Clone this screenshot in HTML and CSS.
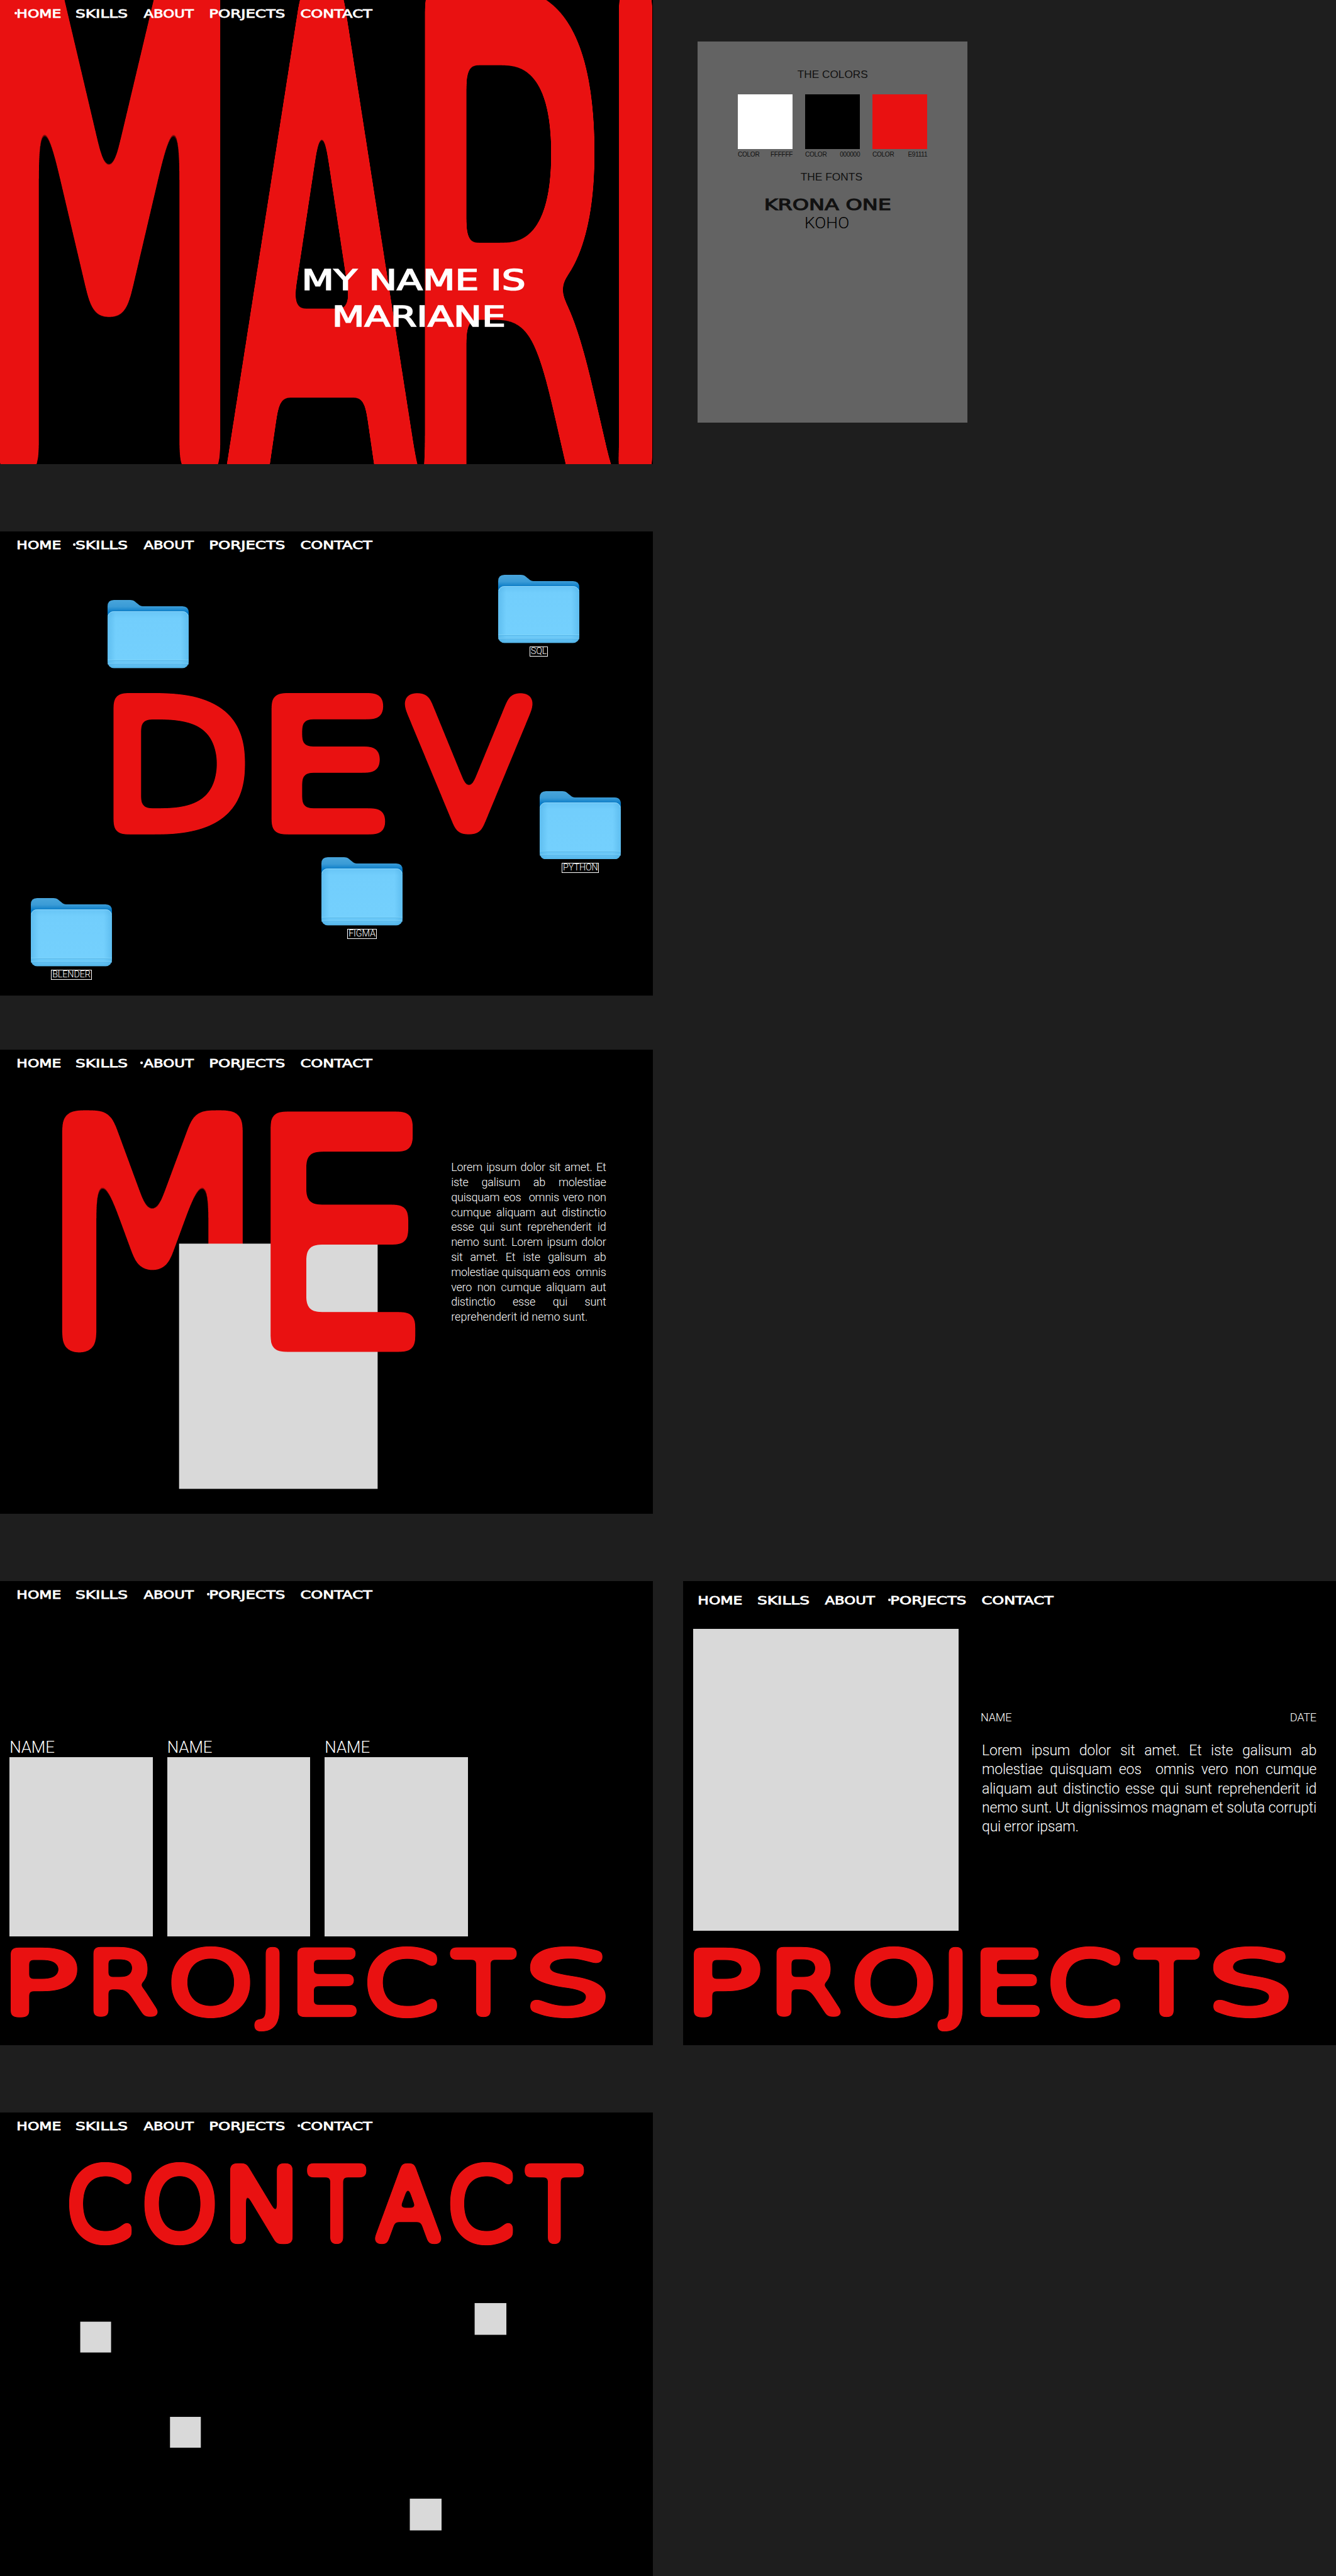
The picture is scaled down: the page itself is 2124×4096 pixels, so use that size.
FILE: index.html
```html
<!DOCTYPE html>
<html lang="en">
<head>
<meta charset="utf-8">
<title>Mariane - portfolio boards</title>
<link rel="stylesheet" href="styles.css">
</head>
<body>
<svg class="defs" width="0" height="0" aria-hidden="true">
  <defs>
    <filter id="soft-s" color-interpolation-filters="sRGB" filterUnits="userSpaceOnUse" x="-50" y="-50" width="1540" height="1124">
      <feMorphology operator="dilate" radius="0 1.500"/>
      <feGaussianBlur stdDeviation="4.500"/>
      <feComponentTransfer result="shape"><feFuncA type="linear" slope="10" intercept="-4.500"/></feComponentTransfer>
      <feFlood flood-color="#e91111"/><feComposite operator="in" in2="shape"/>
    </filter>
    <filter id="soft-m" color-interpolation-filters="sRGB" filterUnits="userSpaceOnUse" x="-50" y="-50" width="1540" height="1124">
      <feMorphology operator="dilate" radius="0 5"/>
      <feGaussianBlur stdDeviation="11"/>
      <feComponentTransfer result="shape"><feFuncA type="linear" slope="22" intercept="-10.500"/></feComponentTransfer>
      <feFlood flood-color="#e91111"/><feComposite operator="in" in2="shape"/>
    </filter>
    <filter id="soft-e" color-interpolation-filters="sRGB" filterUnits="userSpaceOnUse" x="-50" y="-50" width="1540" height="1124">
      <feMorphology operator="dilate" radius="0 9"/>
      <feGaussianBlur stdDeviation="15"/>
      <feComponentTransfer result="shape"><feFuncA type="linear" slope="30" intercept="-14.500"/></feComponentTransfer>
      <feFlood flood-color="#e91111"/><feComposite operator="in" in2="shape"/>
    </filter>
    <filter id="soft-me" color-interpolation-filters="sRGB" filterUnits="userSpaceOnUse" x="-50" y="-50" width="1540" height="1124">
      <feMorphology operator="dilate" radius="0 10"/>
      <feGaussianBlur stdDeviation="19"/>
      <feComponentTransfer result="shape"><feFuncA type="linear" slope="36" intercept="-17.500"/></feComponentTransfer>
      <feFlood flood-color="#e91111"/><feComposite operator="in" in2="shape"/>
    </filter>
    <filter id="soft-l" color-interpolation-filters="sRGB" filterUnits="userSpaceOnUse" x="-150" y="-150" width="1740" height="1324">
      <feGaussianBlur stdDeviation="11 22"/>
      <feComponentTransfer result="shape"><feFuncA type="linear" slope="34" intercept="-16.500"/></feComponentTransfer>
      <feFlood flood-color="#e91111"/><feComposite operator="in" in2="shape"/>
    </filter>
    <filter id="soft-xl" color-interpolation-filters="sRGB" filterUnits="userSpaceOnUse" x="-150" y="-250" width="1740" height="1524">
      <feMorphology operator="dilate" radius="0 70"/>
      <feGaussianBlur stdDeviation="18 30"/>
      <feComponentTransfer result="shape"><feFuncA type="linear" slope="40" intercept="-19.500"/></feComponentTransfer>
      <feFlood flood-color="#e91111"/><feComposite operator="in" in2="shape"/>
    </filter>
    <linearGradient id="back" x1="0" y1="0" x2="0" y2="1">
      <stop offset="0" stop-color="#49a5db"/><stop offset=".3" stop-color="#3a9bd6"/><stop offset=".55" stop-color="#0579c6"/><stop offset="1" stop-color="#0579c6"/>
    </linearGradient>
    <linearGradient id="front" x1="0" y1="0" x2="0" y2="1">
      <stop offset="0" stop-color="#68c5f6"/><stop offset=".12" stop-color="#72cefc"/><stop offset=".85" stop-color="#74d0fd"/><stop offset="1" stop-color="#55b6ea"/>
    </linearGradient>
    <linearGradient id="sides">
      <stop offset="0" stop-color="#3fa3dc" stop-opacity=".4"/><stop offset=".1" stop-color="#3fa3dc" stop-opacity="0"/><stop offset=".9" stop-color="#3fa3dc" stop-opacity="0"/><stop offset="1" stop-color="#3fa3dc" stop-opacity=".4"/>
    </linearGradient>
    <symbol id="folder" viewBox="0 0 179 151">
      <path d="M0 45V14Q0 0 14 0H50C58 0 61 4 66 8C71 12 73 14 80 14H165Q179 14 179 28V50H0Z" fill="url(#back)"/>
      <rect y="25" width="179" height="125.500" rx="14" fill="url(#front)"/>
      <rect y="25" width="179" height="125.500" rx="14" fill="url(#sides)"/>
      <path d="M1 36Q3 25.700 14 25.700H165Q176 25.700 178 36" fill="none" stroke="#98dcfd" stroke-width="1.200"/>
      <path d="M0 134H179M0 141.500H179" stroke="#4fb0e6" stroke-width="1.200"/>
      <path d="M0 132.500H179M0 140H179" stroke="#86d6fb" stroke-width="1"/>
    </symbol>
  </defs>
</svg>

<main class="canvas">
  <section class="board">
    <svg class="lettering" viewBox="0 0 1440 1024"><text class="giant letter-M" y="982" data-cap="1000" data-ink="-14 489">M</text><text class="giant" data-base="1165 1215 1052" data-cap="1200 1250 1087" data-ink="480 942 934 1390 1363 1442">ARI</text></svg>
    <nav class="nav">
      <svg width="95" height="40"><circle cx="-4" cy="29" r="3"/><text y="39" data-cap="19" data-ink="0 95">HOME</text></svg>
      <svg width="113" height="40"><text y="39" data-cap="19" data-ink="0 113">SKILLS</text></svg>
      <svg width="112" height="40"><text y="39" data-cap="19" data-ink="0 112">ABOUT</text></svg>
      <svg width="165" height="40"><text y="39" data-cap="19" data-ink="0 165">PORJECTS</text></svg>
      <svg width="158" height="40"><text y="39" data-cap="19" data-ink="0 159">CONTACT</text></svg>
    </nav>
    <svg class="intro" width="487" height="170"><text y="82" data-cap="48.500" data-ink="0 486">MY NAME IS</text><text y="162" data-cap="48.500" data-ink="67 441">MARIANE</text></svg>
  </section>

  <section class="palette">
    <svg class="caption" width="154" height="24"><text y="20" data-cap="16.500" data-ink="0 154">THE COLORS</text></svg>
    <div class="swatches">
      <div class="swatch white"><i></i><p><span>COLOR</span><span>FFFFFF</span></p></div>
      <div class="swatch black"><i></i><p><span>COLOR</span><span>000000</span></p></div>
      <div class="swatch red"><i></i><p><span>COLOR</span><span>E91111</span></p></div>
    </div>
    <svg class="caption fonts" width="135" height="24"><text y="20" data-cap="16.500" data-ink="0 135">THE FONTS</text></svg>
    <svg class="krona" width="276" height="40"><text y="34" data-cap="27.300" data-ink="0 276">KRONA ONE</text></svg>
    <svg class="koho" width="94" height="32"><text y="30" data-cap="26" data-ink="0 94">KOHO</text></svg>
  </section>

  <section class="board r2">
    <nav class="nav">
      <svg width="95" height="40"><text y="39" data-cap="19" data-ink="0 95">HOME</text></svg>
      <svg width="113" height="40"><circle cx="-4" cy="29" r="3"/><text y="39" data-cap="19" data-ink="0 113">SKILLS</text></svg>
      <svg width="112" height="40"><text y="39" data-cap="19" data-ink="0 112">ABOUT</text></svg>
      <svg width="165" height="40"><text y="39" data-cap="19" data-ink="0 165">PORJECTS</text></svg>
      <svg width="158" height="40"><text y="39" data-cap="19" data-ink="0 159">CONTACT</text></svg>
    </nav>
    <svg class="lettering" viewBox="0 0 1440 1024"><text class="dev" y="663" data-cap="303" data-ink="245 541 593 852 886 1178">DEV</text></svg>
    <figure class="folder f1"><svg><use href="#folder"/></svg></figure>
    <figure class="folder f2"><svg><use href="#folder"/></svg><figcaption>SQL</figcaption></figure>
    <figure class="folder f3"><svg><use href="#folder"/></svg><figcaption>PYTHON</figcaption></figure>
    <figure class="folder f4"><svg><use href="#folder"/></svg><figcaption>FIGMA</figcaption></figure>
    <figure class="folder f5"><svg><use href="#folder"/></svg><figcaption>BLENDER</figcaption></figure>
  </section>

  <section class="board r3">
    <nav class="nav">
      <svg width="95" height="40"><text y="39" data-cap="19" data-ink="0 95">HOME</text></svg>
      <svg width="113" height="40"><text y="39" data-cap="19" data-ink="0 113">SKILLS</text></svg>
      <svg width="112" height="40"><circle cx="-4" cy="29" r="3"/><text y="39" data-cap="19" data-ink="0 112">ABOUT</text></svg>
      <svg width="165" height="40"><text y="39" data-cap="19" data-ink="0 165">PORJECTS</text></svg>
      <svg width="158" height="40"><text y="39" data-cap="19" data-ink="0 159">CONTACT</text></svg>
    </nav>
    <svg class="lettering" viewBox="0 0 1440 1024">
      <text class="me letter-M" y="659" data-cap="519" data-ink="129 538">M</text>
      <rect x="395" y="428" width="438" height="541" fill="#d9d9d9"/>
      <text class="me" y="658.500" data-cap="517" data-ink="589 919">E</text>
    </svg>
    <p class="about">
      <span>Lorem ipsum dolor sit amet. Et</span>
      <span>iste galisum ab molestiae</span>
      <span>quisquam eos &nbsp;omnis vero non</span>
      <span>cumque aliquam aut distinctio</span>
      <span>esse qui sunt reprehenderit id</span>
      <span>nemo sunt. Lorem ipsum dolor</span>
      <span>sit amet. Et iste galisum ab</span>
      <span>molestiae quisquam eos &nbsp;omnis</span>
      <span>vero non cumque aliquam aut</span>
      <span>distinctio esse qui sunt</span>
      <span>reprehenderit id nemo sunt.</span>
    </p>
  </section>

  <section class="board r4">
    <nav class="nav">
      <svg width="95" height="40"><text y="39" data-cap="19" data-ink="0 95">HOME</text></svg>
      <svg width="113" height="40"><text y="39" data-cap="19" data-ink="0 113">SKILLS</text></svg>
      <svg width="112" height="40"><text y="39" data-cap="19" data-ink="0 112">ABOUT</text></svg>
      <svg width="165" height="40"><circle cx="-4" cy="29" r="3"/><text y="39" data-cap="19" data-ink="0 165">PORJECTS</text></svg>
      <svg width="158" height="40"><text y="39" data-cap="19" data-ink="0 159">CONTACT</text></svg>
    </nav>
    <div class="cards">
      <article><h3>NAME</h3><div></div></article>
      <article><h3>NAME</h3><div></div></article>
      <article><h3>NAME</h3><div></div></article>
    </div>
    <svg class="lettering" viewBox="0 0 1440 1024"><text class="projects" y="960" data-cap="151" data-ink="20 172 203 352 377 555 560 617 653 788 809 967 991 1141 1166 1339">PROJECTS</text></svg>
  </section>

  <section class="board r4 detail">
    <nav class="nav">
      <svg width="95" height="40"><text y="39" data-cap="19" data-ink="0 95">HOME</text></svg>
      <svg width="113" height="40"><text y="39" data-cap="19" data-ink="0 113">SKILLS</text></svg>
      <svg width="112" height="40"><text y="39" data-cap="19" data-ink="0 112">ABOUT</text></svg>
      <svg width="165" height="40"><circle cx="-4" cy="29" r="3"/><text y="39" data-cap="19" data-ink="0 165">PORJECTS</text></svg>
      <svg width="158" height="40"><text y="39" data-cap="19" data-ink="0 159">CONTACT</text></svg>
    </nav>
    <div class="project">
      <div class="cover"></div>
      <div class="text">
        <header><span>NAME</span><span>DATE</span></header>
        <p>
          <span>Lorem ipsum dolor sit amet. Et iste galisum ab</span>
          <span>molestiae quisquam eos &nbsp;omnis vero non cumque</span>
          <span>aliquam aut distinctio esse qui sunt reprehenderit id</span>
          <span>nemo sunt. Ut dignissimos magnam et soluta corrupti</span>
          <span>qui error ipsam.</span>
        </p>
      </div>
    </div>
    <svg class="lettering" viewBox="0 0 1440 1024"><text class="projects" y="960" data-cap="151" data-ink="20 172 203 352 377 555 560 617 653 788 809 967 991 1141 1166 1339">PROJECTS</text></svg>
  </section>

  <section class="board r5">
    <nav class="nav">
      <svg width="95" height="40"><text y="39" data-cap="19" data-ink="0 95">HOME</text></svg>
      <svg width="113" height="40"><text y="39" data-cap="19" data-ink="0 113">SKILLS</text></svg>
      <svg width="112" height="40"><text y="39" data-cap="19" data-ink="0 112">ABOUT</text></svg>
      <svg width="165" height="40"><text y="39" data-cap="19" data-ink="0 165">PORJECTS</text></svg>
      <svg width="158" height="40"><circle cx="-4" cy="29" r="3"/><text y="39" data-cap="19" data-ink="0 159">CONTACT</text></svg>
    </nav>
    <svg class="lettering" viewBox="0 0 1440 1024">
      <text class="contact" y="288.500" data-cap="175.500" data-ink="151.500 293 318 477 505 649 676 809 824 975 992 1134 1156 1289">CONTACT</text>
      <g fill="#d9d9d9">
        <rect x="177" y="461.500" width="68" height="68"/>
        <rect x="1047" y="420.500" width="70" height="70"/>
        <rect x="375" y="671.500" width="68" height="68"/>
        <rect x="904" y="852" width="70" height="70"/>
      </g>
    </svg>
  </section>
</main>
<script src="fit.js"></script>
</body>
</html>
```
FILE: fit.js
```js
// Fits display text to its ink boxes.
// data-cap / data-base: cap height and baseline, one value or one per letter.
// data-ink: left/right pairs, one for the whole string or one per letter.
const ctx = document.createElement('canvas').getContext('2d');
const NS = 'http://www.w3.org/2000/svg';

function place(node, str, baseline, capHeight, x0, x1) {
  const cs = getComputedStyle(node);
  const stroke = parseFloat(cs.getPropertyValue('--stroke')) || 0;
  ctx.font = `${cs.fontWeight} 1000px ${cs.fontFamily}`;
  const cap = ctx.measureText('H').actualBoundingBoxAscent / 1000;
  const size = (capHeight - stroke) / cap;
  const m = ctx.measureText(str);
  const left = -m.actualBoundingBoxLeft / 1000 * size;
  const right = m.actualBoundingBoxRight / 1000 * size;
  const s = (x1 - x0) / (right - left + stroke);
  node.style.fontSize = size + 'px';
  node.setAttribute('x', x0 + s * (stroke / 2 - left));
  node.setAttribute('y', baseline - stroke / 2);
  node.setAttribute('textLength', m.width / 1000 * size * s);
  node.setAttribute('lengthAdjust', 'spacingAndGlyphs');
}

document.querySelectorAll('text[data-ink]').forEach(text => {
  const list = v => v.split(' ').map(Number);
  const ink = list(text.dataset.ink);
  const caps = list(text.dataset.cap);
  const bases = list(text.dataset.base || text.getAttribute('y'));
  const str = text.textContent;
  if (ink.length === 2) {
    place(text, str, bases[0], caps[0], ink[0], ink[1]);
    return;
  }
  text.textContent = '';
  [...str].forEach((ch, i) => {
    const t = document.createElementNS(NS, 'tspan');
    t.textContent = ch;
    t.setAttribute('class', 'glyph-' + ch);
    text.appendChild(t);
    place(t, ch, bases[i] ?? bases[0], caps[i] ?? caps[0], ink[2 * i], ink[2 * i + 1]);
  });
});
```
FILE: styles.css
```css
* { box-sizing: border-box; margin: 0; padding: 0; }
html, body { background: #1e1e1e; }
body { width: 2124px; height: 4096px; overflow: hidden; }
.defs { position: absolute; }

.canvas {
  zoom: 0.72073;
  width: 2947px;
  height: 5683px;
  display: grid;
  grid-template-columns: 1440px 1440px;
  grid-template-rows: 1024px 1172px 1144px 1172px 1171px;
  column-gap: 67px;
  font-family: Roboto, "Liberation Sans", sans-serif;
  font-weight: 300;
  color: #fff;
}

.board {
  grid-column: 1;
  position: relative;
  overflow: hidden;
  width: 1440px;
  height: 1024px;
  background: #000;
  align-self: end;
}
.board.detail { grid-column: 2; }
.board.r4 { grid-row: 4; }
.board.r5 { height: 1023px; }

.nav { position: relative; z-index: 2; display: flex; gap: 35px; padding-left: 38.5px; }
.nav svg { overflow: visible; fill: #fff; }
.detail .nav { padding: 12px 0 0 34.5px; }

text { --stroke: 0; }
text, tspan { stroke-linejoin: round; stroke-width: var(--stroke); }
.nav text, .intro text, .krona text {
  --stroke: 1.1;
  font-family: "DejaVu Sans", sans-serif;
  font-weight: 400;
  stroke-linejoin: miter;
}
.nav text { stroke: #fff; }
.intro {
  position: absolute; left: 671px; top: 559px; z-index: 2;
  overflow: visible; fill: #fff;
}
.intro text { --stroke: 2.4; stroke: #fff; }

.lettering { position: absolute; inset: 0; width: 1440px; height: 1024px; }
.lettering text {
  font-family: "DejaVu Sans", sans-serif;
  font-weight: 200;
  fill: #e91111;
  stroke: #e91111;
}
.lettering .giant { --stroke: 70; font-weight: 400; filter: url(#soft-l); }
.giant tspan { stroke-linejoin: miter; }
.giant .glyph-R { --stroke: 36; }
.lettering .giant.letter-M { --stroke: 6; font-family: "DejaVu Sans Mono", monospace; filter: url(#soft-xl); }
.lettering .dev { --stroke: 32; filter: url(#soft-m); }
.lettering .me { --stroke: 46; stroke-linejoin: miter; filter: url(#soft-e); }
.lettering .me.letter-M { --stroke: 6; font-family: "DejaVu Sans Mono", monospace; font-weight: 400; filter: url(#soft-me); }
.lettering .projects { --stroke: 17; filter: url(#soft-s); }
.lettering .contact { --stroke: 20; filter: url(#soft-s); }

.palette {
  grid-column: 2; grid-row: 1;
  width: 595px; height: 842px;
  margin: 91px 0 0 32px;
  padding-top: 62px;
  background: #636363;
  color: #111;
  display: flex; flex-direction: column; align-items: center;
}
.palette svg { overflow: visible; flex: none; fill: #111; }
.caption text { font-family: "Liberation Sans", Arial, sans-serif; font-weight: 400; }
.swatches { display: flex; gap: 27.5px; margin: 31px 0 0 0; }
.swatch i { display: block; width: 121px; height: 121px; }
.swatch.white i { background: #fff; }
.swatch.black i { background: #000; }
.swatch.red i { background: #e91111; }
.swatch p {
  display: flex; justify-content: space-between;
  font: 400 14px/16px "Liberation Sans", Arial, sans-serif;
  letter-spacing: -0.4px;
  margin-top: 4px;
}
.caption.fonts { margin: 30px 0 0 -6px; }
.krona { margin: 27px 0 0 -20px; }
.krona text { --stroke: 1.6; stroke: #111; }
.koho { margin: 3px 0 0 -24px; }
.palette .koho { fill: #000; }

.folder {
  position: absolute; z-index: 2;
  width: 179px;
  display: flex; flex-direction: column; align-items: center; gap: 8px;
}
.folder svg { width: 179px; height: 151px; display: block; }
.folder figcaption {
  border: 1px solid #fff;
  font-size: 20px; line-height: 19px; letter-spacing: -0.2px;
  padding: 0 1px;
}
.f1 { left: 237px; top: 152px; }
.f2 { left: 1099px; top: 96px; }
.f3 { left: 1191px; top: 573px; }
.f4 { left: 709px; top: 719px; }
.f5 { left: 68px; top: 809px; }

.about {
  position: absolute; left: 995px; top: 243px; width: 342px;
  font-size: 25px; line-height: 33px; letter-spacing: -0.25px;
}
p > span { white-space: nowrap; }
.about span, .text p span { display: block; text-align: justify; text-align-last: justify; }
.about span:last-child, .text p span:last-child { text-align-last: left; }
.about span:last-child { letter-spacing: 0.05px; }

.cards { display: flex; gap: 31.7px; padding: 307px 0 0 21px; }
.cards h3 { font-size: 36px; font-weight: 300; line-height: 39px; margin-bottom: 2px; letter-spacing: -0.1px; }
.cards article div { width: 316px; height: 396px; background: #d9d9d9; }

.project { display: flex; padding: 54px 0 0 22px; }
.cover { width: 586px; height: 666px; background: #d9d9d9; }
.text { width: 741px; margin-left: 48px; padding-top: 180px; }
.text header { display: flex; justify-content: space-between; font-size: 25px; line-height: 30px; letter-spacing: -0.2px; }
.text p { padding: 38px 0 0 3px; font-size: 32px; line-height: 42px; letter-spacing: -0.35px; }
```
